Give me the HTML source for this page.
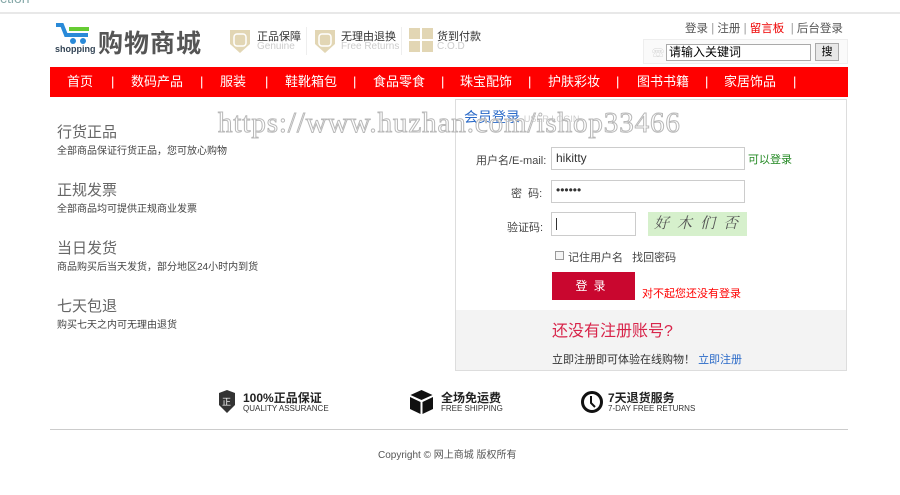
<!DOCTYPE html>
<html><head><meta charset="utf-8"><style>
*{margin:0;padding:0;box-sizing:border-box}
body{width:900px;height:495px;background:#fff;font-family:"Liberation Sans","Noto Sans CJK SC",sans-serif;position:relative;overflow:hidden;color:#333}
.a{position:absolute;white-space:nowrap}
.nav{position:absolute;left:50px;top:67px;width:798px;height:30px;background:#f00;color:#fff;font-size:13px;line-height:30px}
.nav span{position:absolute}
.f12{font-size:12px}
input{font-family:inherit}
</style></head><body>
<div class="a" style="left:0;top:-10px;font-size:14px;color:#8aa">ction</div>
<div class="a" style="left:0;top:12px;width:900px;height:2px;background:#e8e8e8"></div>
<svg class="a" style="left:55px;top:22px" width="40" height="34" viewBox="0 0 40 34">
<path d="M1 3h6l4 10h22" stroke="#2a8ad8" stroke-width="4" fill="none"/>
<rect x="14" y="5" width="20" height="4" fill="#6c3"/>
<rect x="16" y="11" width="14" height="3" fill="#2a8ad8"/>
<circle cx="18" cy="19" r="3" fill="#2a8ad8"/><circle cx="28" cy="19" r="3" fill="#2a8ad8"/>
<text x="0" y="30" font-size="9" font-weight="bold" fill="#345" font-family="Liberation Sans">shopping</text>
</svg>
<div class="a" style="left:98px;top:24px;font-size:25px;color:#555;font-weight:bold;letter-spacing:1px">购物商城</div>
<svg class="a" style="left:228px;top:27px" width="24" height="28"><path d="M2 3h20v14l-10 9-10-9z" fill="#e2d6b4"/><rect x="6" y="7" width="12" height="12" rx="3" fill="none" stroke="#fff" stroke-width="1.5"/></svg>
<div class="a" style="left:257px;top:28px;font-size:11px;color:#333">正品保障</div>
<div class="a" style="left:257px;top:41px;font-size:10px;color:#ccc">Genuine</div>
<div class="a" style="left:306px;top:27px;width:1px;height:28px;background:#eee"></div>
<svg class="a" style="left:313px;top:27px" width="24" height="28"><path d="M2 3h20v14l-10 9-10-9z" fill="#e2d6b4"/><rect x="6" y="7" width="12" height="12" rx="3" fill="none" stroke="#fff" stroke-width="1.5"/></svg>
<div class="a" style="left:341px;top:28px;font-size:11px;color:#333">无理由退换</div>
<div class="a" style="left:341px;top:41px;font-size:10px;color:#ccc">Free Returns</div>
<div class="a" style="left:401px;top:27px;width:1px;height:28px;background:#eee"></div>
<svg class="a" style="left:409px;top:28px" width="24" height="24"><rect width="24" height="24" fill="#e2d6b4"/><path d="M12 0v24M0 12h24" stroke="#fff" stroke-width="2"/></svg>
<div class="a" style="left:437px;top:28px;font-size:11px;color:#333">货到付款</div>
<div class="a" style="left:437px;top:41px;font-size:10px;color:#ccc">C.O.D</div>
<div class="a" style="left:685px;top:20px;font-size:11.5px;color:#555">登录 <span style="color:#999">|</span> 注册 <span style="color:#999">|</span> <span style="color:#e00">留言板</span> &nbsp;<span style="color:#999">|</span> 后台登录</div>
<div class="a" style="left:643px;top:39px;width:205px;height:25px;background:#fafafa;border:1px solid #eee"></div>
<div class="a" style="left:652px;top:44px;font-size:12px;color:#ccc">☏</div>
<div class="a" style="left:666px;top:44px;width:145px;height:17px;border:1px solid #aaa;background:#fff;font-size:12px;line-height:15px;padding-left:2px;color:#000">请输入关键词</div>
<div class="a" style="left:815px;top:43px;width:24px;height:18px;border:1px solid #aaa;background:#e8e8e8;font-size:11px;line-height:16px;text-align:center;color:#000">搜</div>
<div class="nav">
<span style="left:17px">首页</span><span style="left:61px">|</span>
<span style="left:81px">数码产品</span><span style="left:150px">|</span>
<span style="left:170px">服装</span><span style="left:215px">|</span>
<span style="left:235px">鞋靴箱包</span><span style="left:303px">|</span>
<span style="left:323px">食品零食</span><span style="left:391px">|</span>
<span style="left:410px">珠宝配饰</span><span style="left:478px">|</span>
<span style="left:498px">护肤彩妆</span><span style="left:566px">|</span>
<span style="left:587px">图书书籍</span><span style="left:655px">|</span>
<span style="left:674px">家居饰品</span><span style="left:743px">|</span>
</div>
<div class="a" style="left:57px;top:121px;font-size:15px;color:#666">行货正品</div>
<div class="a" style="left:57px;top:142px;font-size:10px;color:#444">全部商品保证行货正品，您可放心购物</div>
<div class="a" style="left:57px;top:179px;font-size:15px;color:#666">正规发票</div>
<div class="a" style="left:57px;top:200px;font-size:10px;color:#444">全部商品均可提供正规商业发票</div>
<div class="a" style="left:57px;top:237px;font-size:15px;color:#666">当日发货</div>
<div class="a" style="left:57px;top:258px;font-size:10px;color:#444">商品购买后当天发货，部分地区24小时内到货</div>
<div class="a" style="left:57px;top:295px;font-size:15px;color:#666">七天包退</div>
<div class="a" style="left:57px;top:316px;font-size:10px;color:#444">购买七天之内可无理由退货</div>
<div class="a" style="left:455px;top:99px;width:392px;height:272px;border:1px solid #ddd;background:#fff"></div>
<div class="a" style="left:456px;top:310px;width:390px;height:60px;background:#f3f3f3"></div>
<div class="a" style="left:464px;top:107px;font-size:14px;color:#2a6ac8">会员登录 <span style="font-size:9px;color:#ccc">USER LOGIN</span></div>
<div class="a" style="left:476px;top:152px;color:#444;font-size:11px">用户名/E-mail:</div>
<div class="a" style="left:551px;top:147px;width:194px;height:23px;border:1px solid #ccc;font-size:12px;line-height:21px;padding-left:4px;color:#333">hikitty</div>
<div class="a" style="left:748px;top:151px;font-size:11px;color:#282">可以登录</div>
<div class="a" style="left:511px;top:185px;font-size:11px;color:#444">密 &nbsp;码:</div>
<div class="a" style="left:551px;top:180px;width:194px;height:23px;border:1px solid #ccc;font-size:12px;line-height:18px;padding-left:4px;color:#333">••••••</div>
<div class="a" style="left:507px;top:219px;font-size:11px;color:#444">验证码:</div>
<div class="a" style="left:551px;top:212px;width:85px;height:24px;border:1px solid #ccc;padding:5px 0 0 4px"><div style="width:1px;height:12px;background:#333"></div></div>
<div class="a" style="left:648px;top:212px;width:99px;height:24px;background:#d6f0cc;font-size:15px;color:#555;font-family:'Liberation Serif','Noto Serif CJK SC',serif;padding-left:6px;letter-spacing:8px;font-style:italic">好木们否</div>
<div class="a" style="left:555px;top:251px;width:9px;height:9px;border:1px solid #999;background:#f5f5f5"></div>
<div class="a" style="left:568px;top:249px;font-size:11px;color:#444">记住用户名 &nbsp; 找回密码</div>
<div class="a" style="left:552px;top:272px;width:83px;height:28px;background:#c9072f;color:#fff;font-size:12px;line-height:28px;text-align:center;letter-spacing:6px">登录</div>
<div class="a" style="left:642px;top:285px;font-size:11px;color:#f00">对不起您还没有登录</div>
<div class="a" style="left:552px;top:317px;font-size:16px;color:#d8244a">还没有注册账号?</div>
<div class="a" style="left:552px;top:351px;font-size:11px;color:#333">立即注册即可体验在线购物！ <span style="color:#2a6ac8">立即注册</span></div>
<div class="a" style="left:218px;top:107px;font-size:29px;letter-spacing:0.9px;font-family:'Liberation Serif',serif;color:rgba(255,255,255,0.5);-webkit-text-stroke:1px #b8b8b8">https://www.huzhan.com/ishop33466</div>
<svg class="a" style="left:218px;top:390px" width="18" height="24"><path d="M1 3l8-3 8 3v12l-8 8-8-8z" fill="#333"/><text x="4" y="15" font-size="9" fill="#fff" font-family="Noto Sans CJK SC">正</text></svg>
<div class="a" style="left:243px;top:389px;font-size:12px;font-weight:bold;color:#222">100%正品保证</div>
<div class="a" style="left:243px;top:404px;font-size:8px;color:#333">QUALITY ASSURANCE</div>
<svg class="a" style="left:410px;top:390px" width="23" height="24"><path d="M11.5 0l11 5-11 5-11-5z" fill="#111"/><path d="M0 7l10.5 5v12L0 19z" fill="#111"/><path d="M23 7l-10.5 5v12L23 19z" fill="#111"/></svg>
<div class="a" style="left:441px;top:389px;font-size:12px;font-weight:bold;color:#222">全场免运费</div>
<div class="a" style="left:441px;top:404px;font-size:8px;color:#333">FREE SHIPPING</div>
<svg class="a" style="left:580px;top:390px" width="24" height="24"><circle cx="12" cy="12" r="9.5" fill="none" stroke="#111" stroke-width="3"/><path d="M11 6v7l4 4" stroke="#111" stroke-width="2" fill="none"/></svg>
<div class="a" style="left:608px;top:389px;font-size:12px;font-weight:bold;color:#222">7天退货服务</div>
<div class="a" style="left:608px;top:404px;font-size:8px;color:#333">7-DAY FREE RETURNS</div>
<div class="a" style="left:50px;top:429px;width:798px;height:1px;background:#ccc"></div>
<div class="a" style="left:378px;top:446px;font-size:10px;color:#555">Copyright © 网上商城 版权所有</div>
</body></html>
